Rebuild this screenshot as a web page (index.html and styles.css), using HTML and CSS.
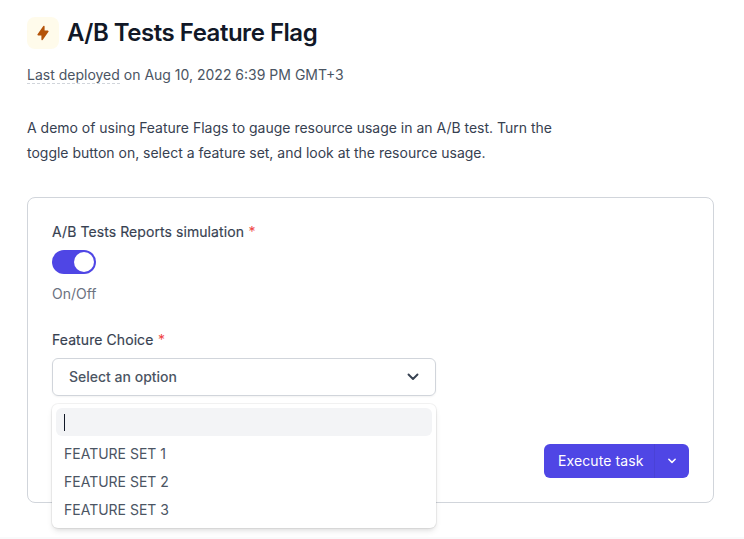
FILE: index.html
```html
<!DOCTYPE html>
<html lang="en">
<head>
<meta charset="utf-8">
<title>A/B Tests Feature Flag</title>
<link rel="stylesheet" href="styles.css">
</head>
<body>
<main class="page">
  <header class="title-row">
    <span class="app-icon">
      <svg width="16" height="16" viewBox="0 0 20 20" fill="#b45309"><path fill-rule="evenodd" d="M11.3 1.046A1 1 0 0112 2v5h4a1 1 0 01.82 1.573l-7 10A1 1 0 018 18v-5H4a1 1 0 01-.82-1.573l7-10a1 1 0 011.12-.38z" clip-rule="evenodd"/></svg>
    </span>
    <h1 class="title">A/B Tests Feature Flag</h1>
  </header>
  <p class="deployed"><span class="dashed">Last deployed</span> on Aug 10, 2022 6:39 PM GMT+3</p>
  <p class="description">A demo of using Feature Flags to gauge resource usage in an A/B test. Turn the toggle button on, select a feature set, and look at the resource usage.</p>
  <section class="card">
    <div class="field">
      <div class="label">A/B Tests Reports simulation <span class="req">*</span></div>
      <div class="toggle"><span class="knob"></span></div>
      <div class="hint">On/Off</div>
    </div>
    <div class="field select-field">
      <div class="label">Feature Choice <span class="req">*</span></div>
      <div class="select">
        <span class="select-text">Select an option</span>
        <svg width="20" height="20" viewBox="0 0 20 20" fill="none" stroke="#374151" stroke-width="1.9" stroke-linecap="round" stroke-linejoin="round"><path d="M5.5 7.5 10 12l4.5-4.5"/></svg>
      </div>
      <div class="menu">
        <div class="search"><span class="caret"></span></div>
        <div class="options">
          <div class="option">FEATURE SET 1</div>
          <div class="option">FEATURE SET 2</div>
          <div class="option">FEATURE SET 3</div>
        </div>
      </div>
    </div>
    <div class="actions">
      <div class="split">
        <span class="run">Execute task</span>
        <span class="more">
          <svg width="14" height="14" viewBox="0 0 20 20" fill="none" stroke="#fff" stroke-width="2.2" stroke-linecap="round" stroke-linejoin="round"><path d="M5.5 7.5 10 12l4.5-4.5"/></svg>
        </span>
      </div>
    </div>
  </section>
</main>
<div class="footer-edge"></div>
</body>
</html>
```
FILE: styles.css
```css
* { box-sizing: border-box; }
html, body { margin: 0; height: 539px; overflow: hidden; background: #fff; }
body { font-family: Inter, sans-serif; color: #374151; position: relative; }
.page { padding: 16px 30px 0 27px; }
.title-row { display: flex; align-items: center; gap: 8px; height: 33px; }
.app-icon {
  width: 32px; height: 32px; border-radius: 8px; background: #fffbeb;
  display: flex; align-items: center; justify-content: center; flex: none;
}
.title { margin: 0; font-size: 24px; line-height: 32px; font-weight: 600; color: #111827; letter-spacing: -0.48px; }
.deployed { margin: 16px 0 0; font-size: 14px; line-height: 20px; color: #4b5563; }
.dashed { border-bottom: 1px dashed #d1d5db; }
.description { margin: 31px 0 0; width: 540px; font-size: 14px; line-height: 24.5px; color: #374151; letter-spacing: -.01px; }
.card {
  margin-top: 32px; height: 306px; border: 1px solid #d1d5db; border-radius: 8px;
  padding: 24px; position: relative;
}
.label { font-size: 14px; line-height: 20px; font-weight: 400; color: #374151; letter-spacing: .08px; -webkit-text-stroke: .15px #374151; }
.req { color: #ef4444; margin-left: .5px; -webkit-text-stroke: 0; }
.toggle {
  margin-top: 8px; width: 44px; height: 24px; border-radius: 12px; background: #4f46e5;
  padding: 2px; display: flex; justify-content: flex-end;
}
.knob { width: 20px; height: 20px; border-radius: 50%; background: #fff; }
.hint { margin-top: 10px; font-size: 14px; line-height: 20px; color: #6b7280; }
.select-field { margin-top: 26px; position: relative; width: 384px; }
.select {
  margin-top: 8px; height: 38px; border: 1px solid #d1d5db; border-radius: 6px;
  padding: 0 12px 0 16px; display: flex; align-items: center; justify-content: space-between;
  font-size: 14px; font-weight: 500; color: #4b5563; box-shadow: 0 1px 2px rgba(0,0,0,.05);
}
.select-text { padding-bottom: 2px; }
.menu {
  position: absolute; top: 74px; left: 0; width: 384px; height: 124px; background: #fff;
  border-radius: 6px; padding: 4px; z-index: 2;
  box-shadow: 0 0 0 1px rgba(0,0,0,.05), 0 4px 6px -1px rgba(0,0,0,.1), 0 2px 4px -1px rgba(0,0,0,.06);
}
.search { height: 28px; border-radius: 6px; background: #f3f4f6; padding: 6px 8px; display: flex; }
.caret { width: 1px; height: 17px; background: #111827; }
.options { margin-top: 4px; }
.option { padding-left: 8px; height: 28px; font-size: 14px; line-height: 28px; color: #4b5563; }
.actions { position: absolute; right: 24px; bottom: 24px; }
.split { display: flex; height: 34px; border-radius: 6px; background: #4f46e5; color: #fff; font-size: 14px; font-weight: 400; letter-spacing: .1px; }
.run { padding: 0 10.5px 0 13.5px; line-height: 34px; border-right: 1px solid #4a42d6; }
.more { width: 34px; display: flex; align-items: center; justify-content: center; }
.footer-edge { position: absolute; left: 0; right: 0; bottom: 0; height: 2px; background: #f9fafb; }
```
